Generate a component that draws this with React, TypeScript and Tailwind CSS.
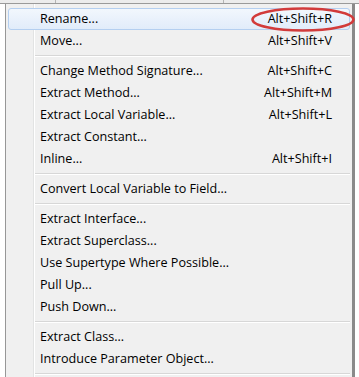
import React from "react";

type Item = { label: string; keys?: string; active?: boolean } | "sep";

const items: Item[] = [
  { label: "Rename...", keys: "Alt+Shift+R", active: true },
  { label: "Move...", keys: "Alt+Shift+V" },
  "sep",
  { label: "Change Method Signature...", keys: "Alt+Shift+C" },
  { label: "Extract Method...", keys: "Alt+Shift+M" },
  { label: "Extract Local Variable...", keys: "Alt+Shift+L" },
  { label: "Extract Constant..." },
  { label: "Inline...", keys: "Alt+Shift+I" },
  "sep",
  { label: "Convert Local Variable to Field..." },
  "sep",
  { label: "Extract Interface..." },
  { label: "Extract Superclass..." },
  { label: "Use Supertype Where Possible..." },
  { label: "Pull Up..." },
  { label: "Push Down..." },
  "sep",
  { label: "Extract Class..." },
  { label: "Introduce Parameter Object..." },
  "sep",
];

export default function App() {
  return (
    <div
      className="relative h-[377px] w-[359px] overflow-hidden bg-white text-[12.6px] text-black"
      style={{ fontFamily: '"Open Sans", "Noto Sans", sans-serif' }}
    >
      {/* toolbar remnant above the menu */}
      <div className="flex h-[4px] border-b border-[#9a9a9a] bg-[#ececec]">
        <div className="ml-[55px] h-full w-px bg-[#b5b5b5]" />
        <div className="ml-[167px] h-full w-px bg-[#b5b5b5]" />
      </div>

      <div className="flex h-[373px]">
        <div className="w-[5px] bg-white" />
        <div className="relative w-[347px] border-l border-[#979797] bg-[#f0f0f0] px-[2px] pt-[4px]">
          {/* icon gutter */}
          <div className="absolute top-0 bottom-0 left-[27px] w-[2px] border-l border-[#e2e3e3] bg-white" />

          {items.map((it, i) =>
            it === "sep" ? (
              <div key={i} className="relative flex h-[8px] items-center">
                <div className="ml-[27px] h-[2px] flex-1 border-t border-[#d7d7d7] bg-white" />
              </div>
            ) : (
              <div
                key={i}
                className={
                  "relative flex h-[22px] items-center justify-between rounded-[3px] border pl-[31px] pr-[17px] " +
                  (it.active
                    ? "border-[#b4cff0] bg-[linear-gradient(#f2f7fd,#e1ecfa)]"
                    : "border-transparent")
                }
              >
                <span>{it.label}</span>
                {it.keys && <span>{it.keys}</span>}
              </div>
            )
          )}
        </div>
        <div className="w-[3px] bg-[#8a8a8a]" />
        <div className="flex-1 bg-white" />
      </div>

      {/* red annotation ring */}
      <svg className="absolute left-[251px] top-[7px]" width="104" height="25" viewBox="0 0 104 25">
        <ellipse cx="52" cy="12.5" rx="50.5" ry="11" fill="none" stroke="#d23b3b" strokeWidth="2.6" />
      </svg>
    </div>
  );
}
